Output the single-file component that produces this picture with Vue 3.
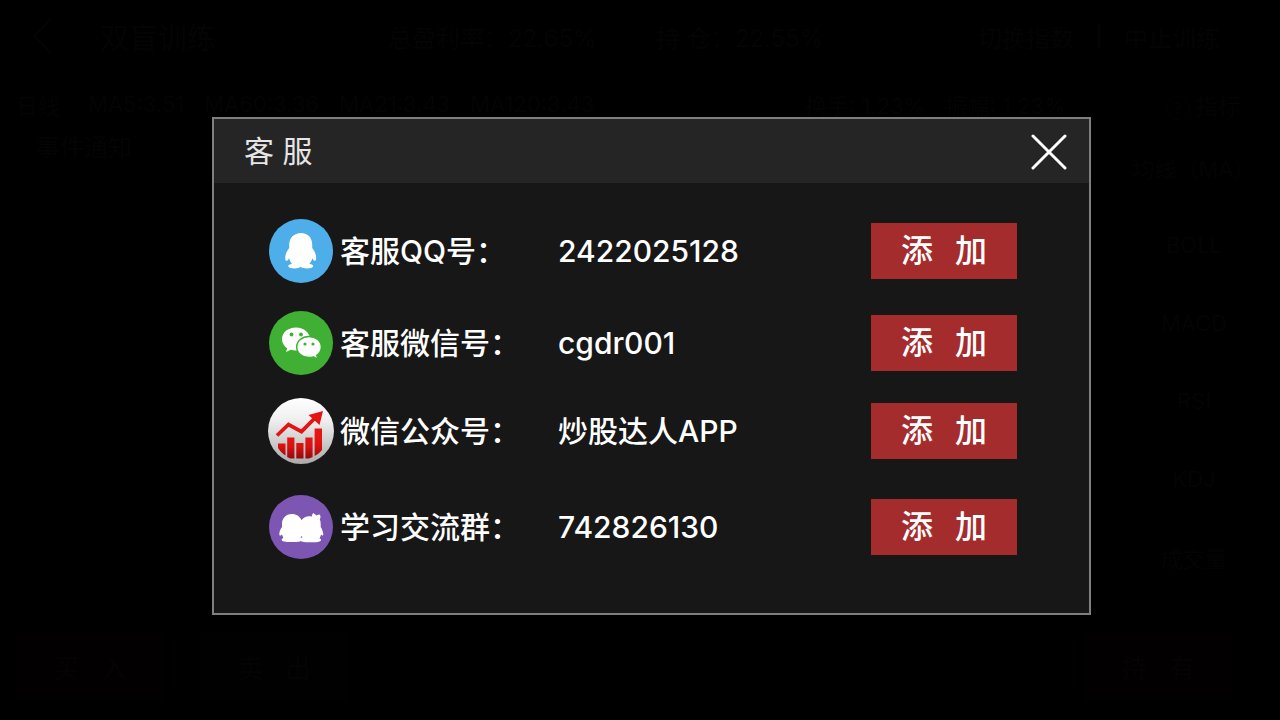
<script setup>
const mainStats = [
  { label: '总盈利率：', value: '22.65%' },
  { label: '持 仓：', value: '22.55%' },
]
const averages = ['MA5:3.51', 'MA60:3.36', 'MA21:3.43', 'MA120:3.43']
const indicators = ['均线（MA）', 'BOLL', 'MACD', 'RSI', 'KDJ', '成交量']
const contacts = [
  { icon: 'qq', label: '客服QQ号：', value: '2422025128' },
  { icon: 'wechat', label: '客服微信号：', value: 'cgdr001' },
  { icon: 'chart', label: '微信公众号：', value: '炒股达人APP' },
  { icon: 'group', label: '学习交流群：', value: '742826130' },
]
</script>

<template>
  <div class="page">
    <div class="backdrop" aria-hidden="true">
      <header class="topbar">
        <svg class="back" viewBox="0 0 20 36"><path d="M19 1 2 18l17 17" /></svg>
        <span class="mode">双盲训练</span>
        <span v-for="s in mainStats" :key="s.label" class="stat">{{ s.label }}{{ s.value }}</span>
        <span class="actions"><span>切换指数</span><i></i><span>中止训练</span></span>
      </header>
      <div class="quotes">
        <span class="period">日线</span>
        <span v-for="a in averages" :key="a">{{ a }}</span>
        <span class="turnover">换手: 1.23%</span>
        <span>振幅: 1.23%</span>
        <span class="metric"><b>?</b> 指标</span>
      </div>
      <div class="middle">
        <span>事件通知</span>
        <div class="indicators"><span v-for="n in indicators" :key="n">{{ n }}</span></div>
      </div>
      <footer class="trade">
        <span class="buy"><i>买</i><i>入</i></span>
        <span class="sell"><i>卖</i><i>出</i></span>
        <span class="buy hold"><i>持</i><i>有</i></span>
      </footer>
    </div>

    <section class="dialog" role="dialog" aria-labelledby="dialog-title">
      <header class="dialog-head">
        <h1 id="dialog-title">客 服</h1>
        <button class="close" type="button" aria-label="关闭">
          <svg viewBox="0 0 36 36"><path d="M2 2l32 32M34 2 2 34" /></svg>
        </button>
      </header>
      <ul class="contacts">
        <li v-for="c in contacts" :key="c.icon" :class="['row', c.icon]">
          <svg v-if="c.icon === 'qq'" class="icon" viewBox="0 0 64 64">
            <circle cx="32" cy="32" r="32" fill="#4daeea" />
            <path fill="#fff" d="M32 14c-7 0-11.800 5-11.800 11.500v3.500c-2.200 2.500-4 6.500-4 10 0 3 1.300 3.300 2.500 2.200.6-.5 1-1.200 1.400-1.900.5 2.200 1.500 4 2.900 5.500-2.600.5-3.900 1.400-3.700 2.500.3 1.700 3 2.200 6.200 2.200 2.800 0 5-.7 6.100-1.700 1.100 1 3.500 1.700 6.300 1.700 3.200 0 5.900-.5 6.200-2.200.2-1.100-1.100-2-3.700-2.500 1.400-1.500 2.400-3.300 2.900-5.500.4.700.8 1.400 1.400 1.900 1.200 1.100 2.500.8 2.500-2.200 0-3.500-1.800-7.500-4-10v-3.500C43.200 19 39 14 32 14z" />
          </svg>
          <svg v-else-if="c.icon === 'wechat'" class="icon" viewBox="0 0 64 64">
            <circle cx="32" cy="32" r="32" fill="#3fb034" />
            <path fill="#fff" d="M27 16.500c-8 0-14 5-14 11.700 0 3.700 2 6.900 5.200 9L17 41l4.700-2.200c1.700.5 3.500.8 5.300.8 8 0 14-5 14-11.400S35 16.500 27 16.500z" />
            <path fill="#fff" stroke="#3fb034" stroke-width="1.500" d="M40 25.500c-6.900 0-12.300 4.600-12.300 10.500S33.100 46.500 40 46.500c1.500 0 3-.2 4.300-.6l4.700 2.600-1.200-4.200c2.900-1.900 4.600-4.900 4.600-8.300C52.400 30.100 46.900 25.500 40 25.500z" />
            <g fill="#3fb034"><circle cx="22.500" cy="23.500" r="1.900" /><circle cx="32" cy="23.500" r="1.900" /><circle cx="36" cy="33" r="1.600" /><circle cx="44" cy="33" r="1.600" /></g>
          </svg>
          <svg v-else-if="c.icon === 'chart'" class="icon" viewBox="0 0 66 66">
            <defs>
              <linearGradient id="silver" x1="0" y1="0" x2="0" y2="1"><stop offset="0" stop-color="#fff" /><stop offset=".35" stop-color="#eee" /><stop offset="1" stop-color="#aaa" /></linearGradient>
              <linearGradient id="bars" gradientUnits="userSpaceOnUse" x1="0" y1="40" x2="0" y2="62"><stop offset="0" stop-color="#e81313" /><stop offset=".4" stop-color="#d91010" /><stop offset="1" stop-color="#8b0808" /></linearGradient>
            </defs>
            <circle cx="33" cy="33" r="33" fill="url(#silver)" />
            <path fill="url(#bars)" d="M10 45.500h7.500v12C14.500 56 12 53 10 50zM19.200 39.500H26.400v21h-4.200l-3-1.500zM28.300 45h7.200v15.500h-7.200zM37.400 39.500h7.200v19.500l-3.500 1.500h-3.700zM46.600 30.500h7.400v21.500c-2 2.500-4.500 4.500-7.400 6z" />
            <path fill="none" stroke="#e51414" stroke-width="3.800" d="m9 37.500 11.500-11 13 7.200L48 19" />
            <path fill="#e51414" d="M55 13 51.500 27l-11-10z" />
          </svg>
          <svg v-else class="icon" viewBox="0 0 64 64">
            <circle cx="32" cy="32" r="32" fill="#7d55b2" />
            <path fill="#fff" d="M23 19c-6.500 0-10 4.500-10 10v3c-1.700 2-2.700 5-2.700 7.300 0 1.700 1.200 1.800 2.700.3.300 1.300.8 2.400 1.500 3.400-1.500.5-2 1.100-1.800 2 .4 1.500 3.500 1.900 6 1.900h8.500c2 0 3.700-.3 4.600-.9 1 .6 2.700 1.200 4.700 1.200h9c3 0 6-.4 6.500-2 .2-.9-.4-1.500-1.500-2 .7-1 1.200-2.200 1.500-3.500 1.400 1.400 2.500.9 2.300-.7-.3-2.300-1.200-5-2.600-7v-3c0-1.700-.3-3.300-.9-4.700 1-1.700 1-3.500-.2-4.900-1.300.1-2.400.5-3.200 1.100-.8-1-1.800-1.900-3.100-2.600-1 1-1.500 2.300-1.500 3.600-5-1-8.800 1-10.300 3.700-1.800-4-5.200-6.200-9.500-6.200z" />
            <circle cx="32.500" cy="42" r=".8" fill="#7d55b2" />
          </svg>
          <span :id="`label-${c.icon}`" class="label">{{ c.label }}</span>
          <span class="value">{{ c.value }}</span>
          <button class="add" type="button" :aria-describedby="`label-${c.icon}`"><span>添</span><span>加</span></button>
        </li>
      </ul>
    </section>
  </div>
</template>

<style>
body { margin: 0; background: #000; }
</style>

<style scoped>
* { box-sizing: border-box; }
.page {
  display: grid;
  min-height: 100vh;
  font-family: Inter, "Noto Sans CJK SC", sans-serif;
  background: #000;
}
.backdrop, .dialog { grid-area: 1 / 1; }
.backdrop {
  display: flex;
  flex-direction: column;
  min-width: 0;
  padding: 16px 16px 20px;
  overflow: hidden;
  white-space: nowrap;
  color: #040404;
  font-size: 24px;
}
.backdrop i { font-style: normal; }
.topbar { display: flex; align-items: center; height: 40px; padding: 0 44px 0 16px; }
.back { width: 20px; height: 36px; fill: none; stroke: #040404; stroke-width: 2; }
.mode { flex: none; width: 336px; padding-left: 48px; font-size: 29px; }
.stat { width: 268px; }
.actions { display: flex; align-items: center; gap: 24px; margin-left: auto; }
.actions i { width: 2px; height: 24px; background: #040404; }
.quotes { display: flex; gap: 20px; align-items: center; height: 32px; margin-top: 32px; font-size: 22px; }
.period { margin-right: 8px; }
.turnover { margin-left: auto; }
.metric { margin: 0 24px 0 80px; }
.metric b {
  display: inline-grid;
  place-items: center;
  width: 24px;
  height: 24px;
  border: 1px solid #040404;
  border-radius: 50%;
  font-size: 16px;
  font-weight: 400;
}
.middle { display: flex; justify-content: space-between; padding: 8px 0 0 20px; }
.indicators {
  display: grid;
  grid-auto-rows: 78px;
  width: 140px;
  place-items: center;
  font-size: 22px;
}
.trade { display: flex; gap: 36px; margin-top: auto; }
.trade span {
  display: flex;
  align-items: center;
  justify-content: center;
  gap: 22px;
  width: 148px;
  height: 68px;
  font-size: 26px;
}
.buy { background: #030001; }
.sell { background: #010101; }
.trade .hold { margin: 0 32px 0 auto; }

.dialog {
  z-index: 1;
  place-self: start center;
  width: 69%;
  min-width: 860px;
  max-width: 879px;
  margin: 117px 0 0 23px;
  border: 2px solid #7f7f7f;
  background: #171717;
  color: #fff;
}
.dialog-head {
  display: flex;
  align-items: center;
  justify-content: space-between;
  height: 64px;
  padding: 0 22px 0 30px;
  background: #252525;
}
h1 { margin: 0; font-size: 30px; line-height: 40px; font-weight: 400; color: #e6e6e6; }
.close { display: grid; padding: 2px 0 0; border: 0; background: none; cursor: pointer; }
.close svg { width: 36px; height: 36px; fill: none; stroke: #fff; stroke-width: 3; stroke-linecap: round; }
.contacts {
  display: grid;
  grid-template-rows: 96px 88px 88px 104px;
  margin: 0;
  padding: 20px 72px 34px 54px;
  list-style: none;
}
.row {
  display: grid;
  grid-template-columns: 66px 216px 1fr 146px;
  column-gap: 6px;
  align-items: center;
  font-size: 30px;
  line-height: 40px;
  font-weight: 500;
  white-space: nowrap;
}
.icon { width: 64px; height: 64px; justify-self: center; }
.chart .icon { width: 66px; height: 66px; }
.value { margin-left: -4px; }
.add {
  display: flex;
  align-items: center;
  justify-content: center;
  gap: 22px;
  height: 56px;
  padding: 0;
  border: 0;
  background: #a42c2d;
  color: #fff;
  font: inherit;
  font-size: 32px;
  cursor: pointer;
}
</style>
